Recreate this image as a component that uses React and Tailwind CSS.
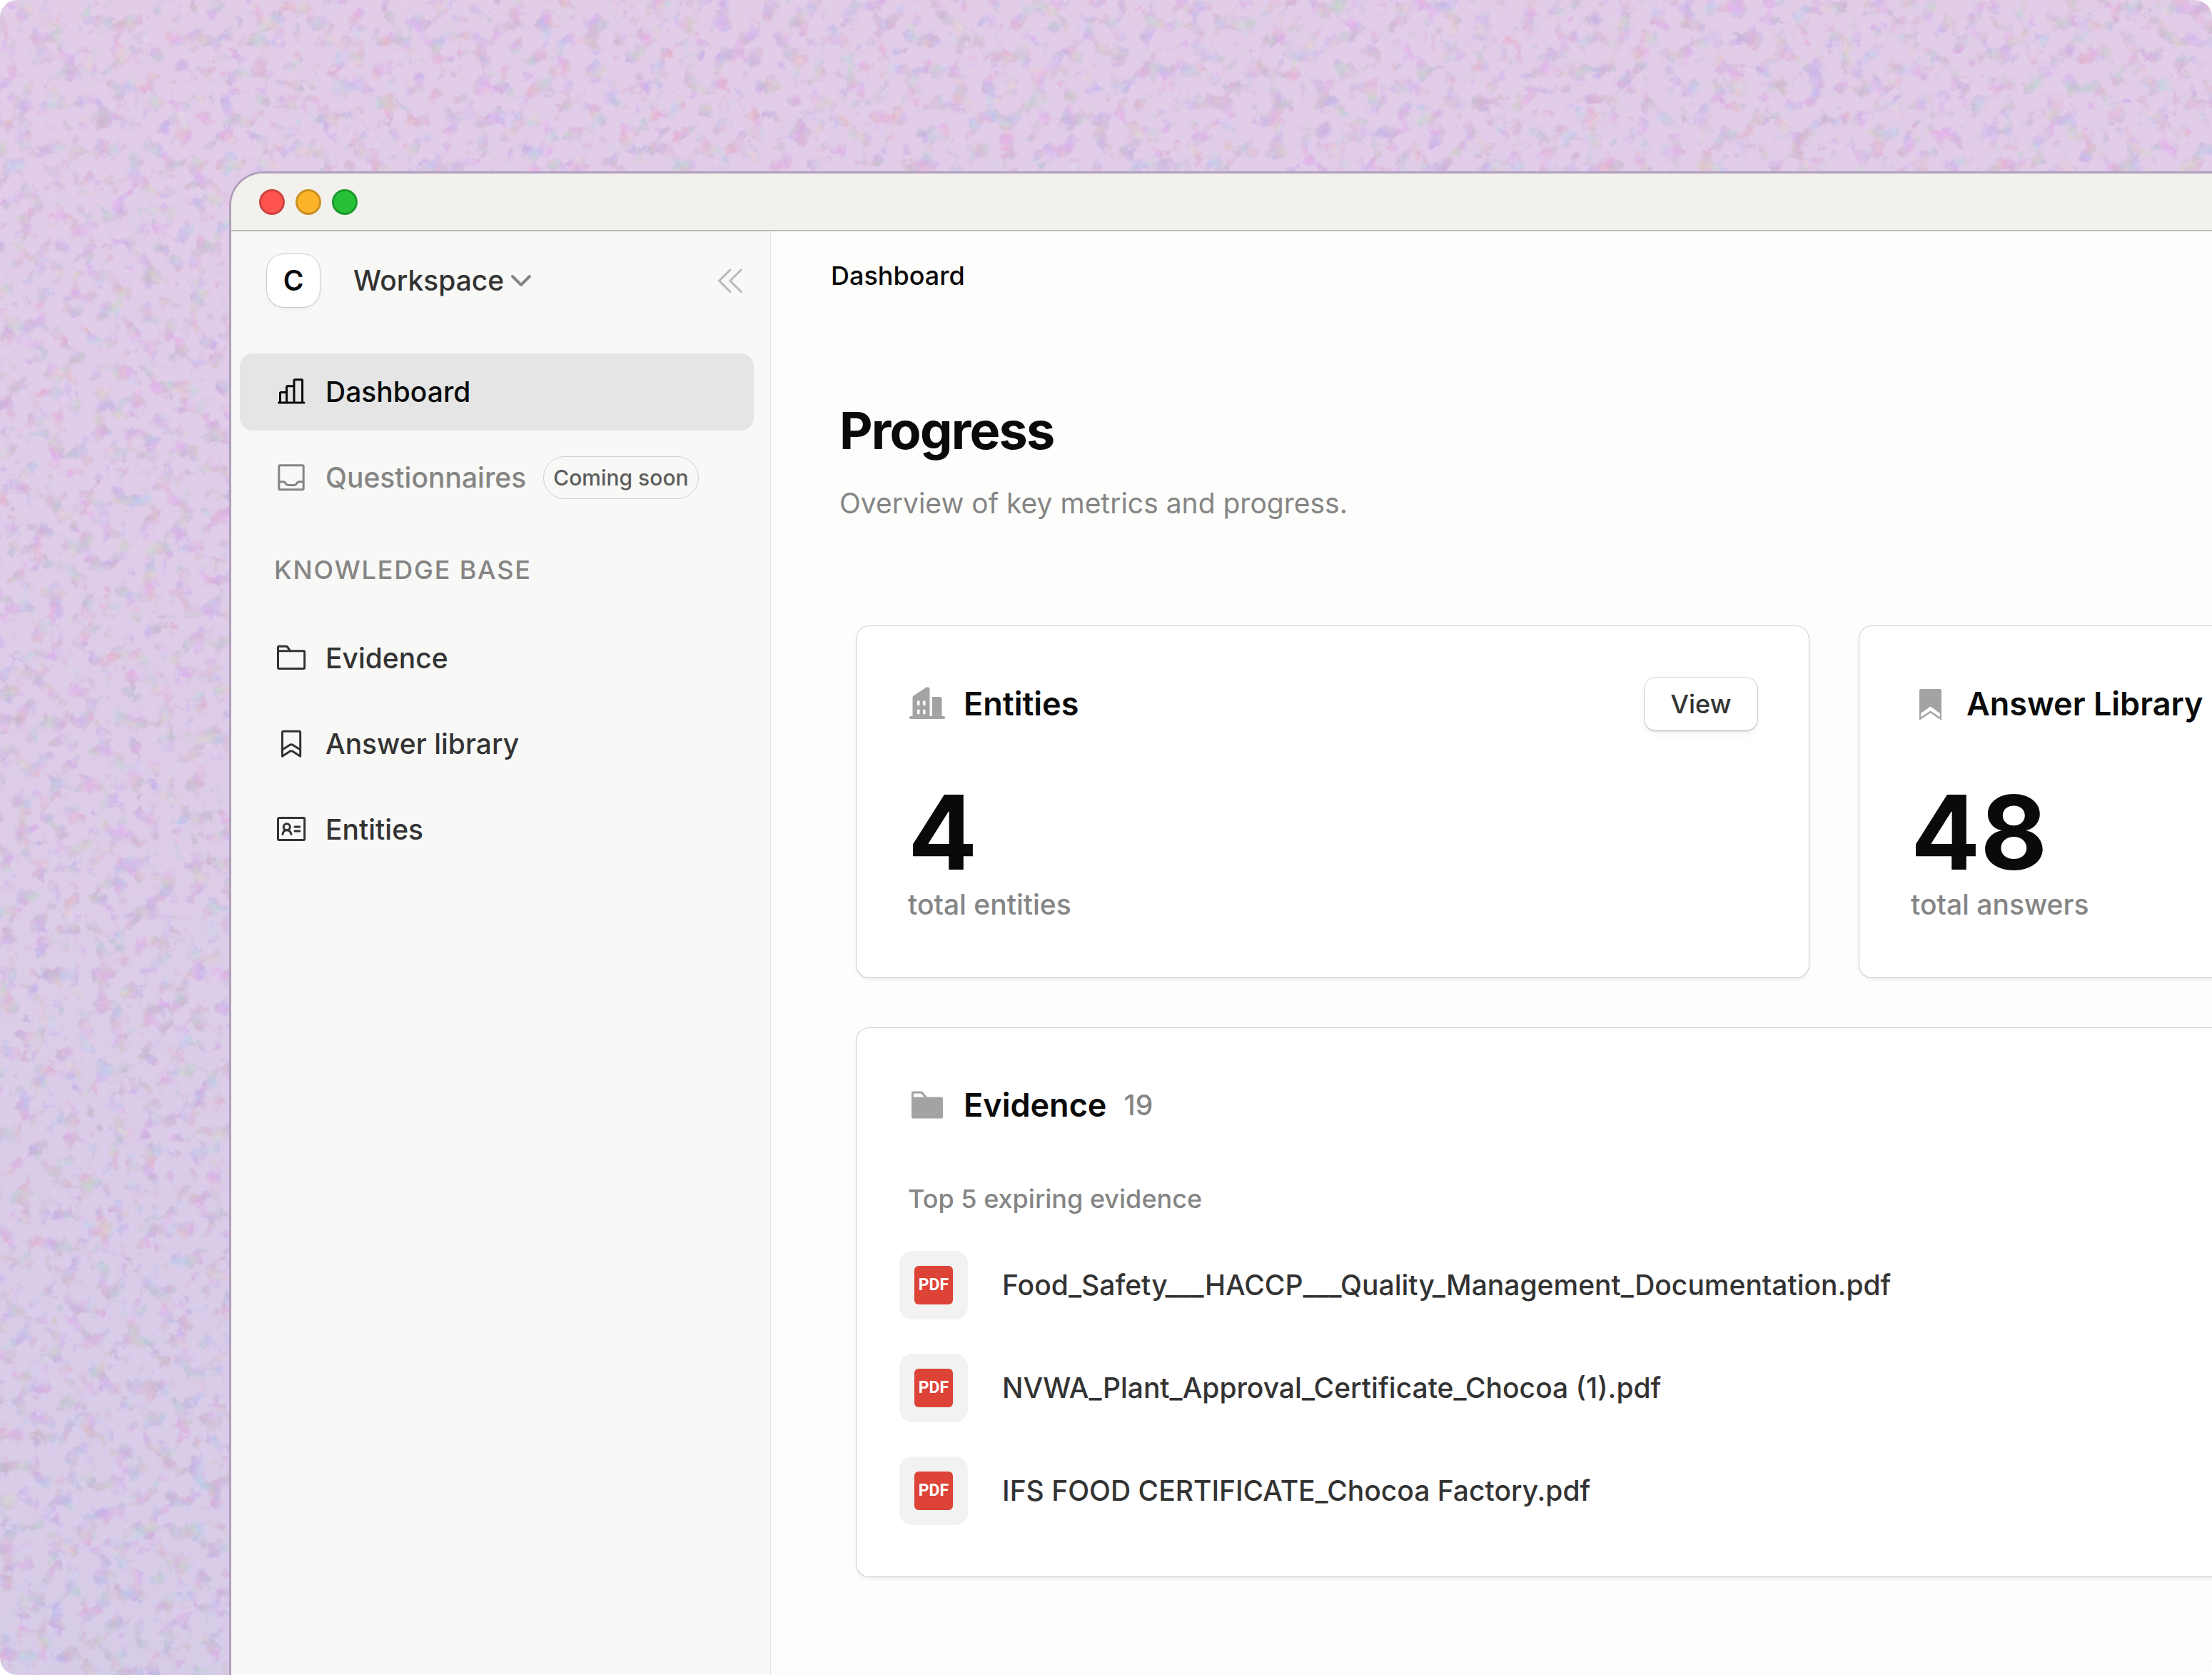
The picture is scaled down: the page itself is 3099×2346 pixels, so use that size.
const icon48 = {
  width: 48,
  height: 48,
  viewBox: '0 0 48 48',
  fill: 'none',
  stroke: 'currentColor',
  strokeWidth: 3,
  strokeLinecap: 'round',
  strokeLinejoin: 'round',
  'aria-hidden': true,
  className: 'shrink-0',
};

function ChartIcon() {
  return (
    <svg {...icon48}>
      <path d="M6.5 39H42M8.5 39V25.6Q8.5 24.4 9.7 24.4H17.6M17.6 39V17Q17.6 15.8 18.8 15.8H28M28 39V8Q28 6.8 29.2 6.8H38.4Q39.6 6.8 39.6 8V39" />
    </svg>
  );
}

function InboxIcon() {
  return (
    <svg {...icon48}>
      <rect x="6.8" y="6.8" width="34.4" height="34" rx="1.5" />
      <path d="M6.8 29.8H13.2Q14.6 29.8 15.5 31L17 33Q18 34.4 19.6 34.4H28.4Q30 34.4 31 33L32.5 31Q33.4 29.8 34.8 29.8H41.2" />
    </svg>
  );
}

function FolderIcon() {
  return (
    <svg {...icon48}>
      <path d="M5.5 13.8V8.8Q5.5 7.3 7 7.3H17Q18 7.3 18.6 8L22.8 13.8" />
      <path d="M5.5 13.8H41.2Q42.7 13.8 42.7 15.3V37Q42.7 38.5 41.2 38.5H7Q5.5 38.5 5.5 37Z" />
    </svg>
  );
}

function BookmarkIcon() {
  return (
    <svg {...icon48}>
      <path d="M11.5 41.2V7.7Q11.5 6.2 13 6.2H35.2Q36.7 6.2 36.7 7.7V41.2L26.4 34.4Q24.1 33 21.8 34.4Z" />
      <path d="M11.5 32L21.8 25.4Q24.1 24 26.4 25.4L36.7 32" />
    </svg>
  );
}

function IdCardIcon() {
  return (
    <svg {...icon48}>
      <rect x="5.5" y="7.6" width="37.2" height="30.8" rx="1.5" />
      <circle cx="17.8" cy="20.2" r="4.5" />
      <path d="M12 30.5Q12.8 24.8 17.8 24.8T24 30.5M29 20H35.8M29 26H35.8" />
    </svg>
  );
}

function ChevronDownIcon() {
  return (
    <svg width="36" height="36" viewBox="0 0 36 36" fill="none" stroke="#858585" strokeWidth="4" strokeLinecap="round" strokeLinejoin="round" aria-hidden="true">
      <path d="M7 12L19 24L31 12" />
    </svg>
  );
}

function CollapseIcon() {
  return (
    <svg width="48" height="48" viewBox="0 0 48 48" fill="none" stroke="#b9b9b9" strokeWidth="3" strokeLinecap="round" strokeLinejoin="round" aria-hidden="true">
      <path d="M24 9L8.5 24.2L24 39.5M39.3 9L23.8 24.2L39.3 39.5" />
    </svg>
  );
}

function BuildingSolidIcon() {
  return (
    <svg width="54" height="54" viewBox="0 0 54 54" fill="#a3a3a3" aria-hidden="true" className="shrink-0">
      <path
        fillRule="evenodd"
        d="M6.5 18Q6.5 16.4 7.8 15.4L25.6 3.8Q27 3 28.6 3.4Q30.5 4 30.5 6V44H34V17H45Q47.5 17 47.5 19.5V44H50.3Q52 44 52 46T50.3 48H3.7Q2 48 2 46T3.7 44H6.5ZM13 22.5V29H16.5V22.5ZM21 22.5V29H24.5V22.5ZM13 34.7V41.2H16.5V34.7ZM21 34.7V41.2H24.5V34.7Z"
      />
    </svg>
  );
}

function BookmarkSolidIcon() {
  return (
    <svg width="54" height="54" viewBox="0 0 54 54" fill="#a3a3a3" aria-hidden="true" className="shrink-0">
      <path
        fillRule="evenodd"
        d="M12 8Q12 6 14 6H41Q43 6 43 8V50L27.5 39.5L12 50ZM27.5 30.5L14.2 40V45.6L27.5 36.6L40.8 45.6V40Z"
      />
    </svg>
  );
}

function FolderSolidIcon() {
  return (
    <svg width="54" height="54" viewBox="0 0 54 54" fill="#a3a3a3" aria-hidden="true" className="shrink-0">
      <path
        fillRule="evenodd"
        d="M5 10Q5 7.5 7.5 7.5H18Q20 7.5 21.3 9L26.8 15.4H46.5Q49 15.4 49 18V43Q49 45.6 46.5 45.6H7.5Q5 45.6 5 43ZM8 10.5V15.4H22.6L19 11.2Q18.4 10.5 17.4 10.5Z"
      />
    </svg>
  );
}

function GrainBackground() {
  return (
    <svg className="absolute inset-0 h-full w-full" aria-hidden="true">
      <defs>
        <linearGradient id="wash" x1="0" y1="0" x2="0" y2="1">
          <stop offset="0" stopColor="#e2cde9" />
          <stop offset="1" stopColor="#d7cce8" />
        </linearGradient>
        <filter id="grain" x="0" y="0" width="100%" height="100%" colorInterpolationFilters="sRGB">
          <feTurbulence type="fractalNoise" baseFrequency="0.045" numOctaves="4" seed="7" />
          <feComponentTransfer>
            <feFuncR type="linear" slope="1.6" intercept="-0.2" />
            <feFuncG type="linear" slope="1.6" intercept="-0.3" />
            <feFuncB type="linear" slope="1.6" intercept="-0.15" />
            <feFuncA type="linear" slope="8" intercept="-3.8" />
          </feComponentTransfer>
        </filter>
      </defs>
      <rect width="100%" height="100%" fill="url(#wash)" />
      <rect width="100%" height="100%" filter="url(#grain)" opacity="0.12" />
    </svg>
  );
}

function NavItem({ icon, label, active, muted, badge }) {
  const tone = active ? 'bg-[#e5e5e5] text-[#0a0a0a]' : muted ? 'text-[#858585]' : 'text-[#333333]';
  return (
    <li>
      <a
        href="#"
        aria-current={active ? 'page' : undefined}
        className={`flex h-[108px] items-center gap-6 rounded-[18px] px-12 text-[39px] leading-[60px] font-medium ${tone}`}
      >
        {icon}
        <span>{label}</span>
        {badge && (
          <span className="flex h-[60px] items-center rounded-full border border-[#cfcfcf] px-[13px] text-[30px] leading-[36px] whitespace-nowrap text-[#5c5c5c]">
            {badge}
          </span>
        )}
      </a>
    </li>
  );
}

function Sidebar() {
  return (
    <aside className="w-[756px] shrink-0 border-r border-[#e6e6e6] bg-[#f8f8f6] pt-8">
      <div className="flex h-[74px] items-center pr-8 pl-[50px]">
        <span className="flex size-[74px] items-center justify-center rounded-[24px] bg-white text-[39px] font-semibold text-[#0a0a0a] shadow-[0_0_0_1px_rgba(0,0,0,0.16),0_3px_6px_rgba(0,0,0,0.06)]">
          C
        </span>
        <button type="button" className="ml-[47px] flex items-center gap-[5px] text-[39px] leading-[60px] font-medium text-[#333333]">
          Workspace
          <ChevronDownIcon />
        </button>
        <button type="button" aria-label="Collapse sidebar" className="ml-auto">
          <CollapseIcon />
        </button>
      </div>
      <nav className="mt-[65px] pr-[23px] pl-3">
        <ul className="flex flex-col gap-3">
          <NavItem icon={<ChartIcon />} label="Dashboard" active />
          <NavItem icon={<InboxIcon />} label="Questionnaires" muted badge="Coming soon" />
        </ul>
        <h2 className="mt-12 mb-[43px] pl-12 text-[36px] leading-[54px] font-medium tracking-wider text-[#858585]">
          KNOWLEDGE BASE
        </h2>
        <ul className="flex flex-col gap-3">
          <NavItem icon={<FolderIcon />} label="Evidence" />
          <NavItem icon={<BookmarkIcon />} label="Answer library" />
          <NavItem icon={<IdCardIcon />} label="Entities" />
        </ul>
      </nav>
    </aside>
  );
}

function Card({ children }) {
  return (
    <section className="rounded-[18px] bg-white p-[72px] shadow-[0_0_0_1px_rgba(0,0,0,0.17),0_3px_6px_rgba(0,0,0,0.07)]">
      {children}
    </section>
  );
}

function CardTitle({ icon, children }) {
  return (
    <div className="flex items-center gap-6">
      {icon}
      <h3 className="text-[45px] leading-[72px] font-semibold whitespace-nowrap text-[#0a0a0a]">{children}</h3>
    </div>
  );
}

function StatCard({ icon, title, value, caption }) {
  return (
    <Card>
      <div className="flex h-[74px] items-center justify-between">
        <CardTitle icon={icon}>{title}</CardTitle>
        <button
          type="button"
          className="h-[74px] w-[158px] rounded-[16px] bg-white text-[36px] font-medium text-[#333333] shadow-[0_0_0_1px_rgba(0,0,0,0.15),0_2px_3px_rgba(0,0,0,0.12),0_6px_12px_rgba(0,0,0,0.04)]"
        >
          View
        </button>
      </div>
      <p className="mt-[72px] text-[144px] leading-[142px] font-bold text-[#0a0a0a]">{value}</p>
      <p className="text-[39px] leading-[60px] font-medium text-[#858585]">{caption}</p>
    </Card>
  );
}

const files = [
  'Food_Safety___HACCP___Quality_Management_Documentation.pdf',
  'NVWA_Plant_Approval_Certificate_Chocoa (1).pdf',
  'IFS FOOD CERTIFICATE_Chocoa Factory.pdf',
];

function FileRow({ name }) {
  return (
    <li className="flex items-center gap-12">
      <span className="flex size-24 items-center justify-center rounded-[18px] bg-[#f2f2f2]">
        <span className="flex size-[54px] items-center justify-center rounded-[6px] bg-[#dd4437] font-['Roboto',sans-serif] text-[23px] font-bold text-white">
          PDF
        </span>
      </span>
      <a href="#" className="text-[39px] leading-[60px] font-medium text-[#333333]">
        {name}
      </a>
    </li>
  );
}

function EvidenceCard() {
  return (
    <Card>
      <div className="flex items-center gap-6">
        <CardTitle icon={<FolderSolidIcon />}>Evidence</CardTitle>
        <span className="text-[39px] leading-[60px] font-medium text-[#858585]">19</span>
      </div>
      <p className="mt-[70px] mb-12 text-[36px] leading-[50px] font-medium text-[#858585]">Top 5 expiring evidence</p>
      <ul className="-ml-3 flex flex-col gap-12">
        {files.map((name) => (
          <FileRow key={name} name={name} />
        ))}
      </ul>
    </Card>
  );
}

function TitleBar() {
  return (
    <div className="flex h-[81px] items-center gap-[15px] border-b-2 border-[#bbbab8] bg-[#f2f1ed] pl-[39px]">
      <span className="size-9 rounded-full border-[3px] border-[#cd443f] bg-[#ff544e]" />
      <span className="size-9 rounded-full border-[3px] border-[#cb9022] bg-[#feb42a]" />
      <span className="size-9 rounded-full border-[3px] border-[#1e9a2d] bg-[#26c138]" />
    </div>
  );
}

export default function App() {
  return (
    <div className="bg-white font-['Inter',sans-serif] text-[#0a0a0a]">
      <div className="relative flex min-h-screen flex-col overflow-hidden rounded-[24px] pt-[240px] pl-[321px]">
        <GrainBackground />
        <div className="relative mr-[-960px] flex flex-1 flex-col overflow-hidden rounded-tl-[48px] border-t-[3px] border-l-[3px] border-[#b0a0bb] bg-[#f2f1ed]">
          <TitleBar />
          <div className="flex flex-1">
            <Sidebar />
            <main className="min-w-0 flex-1 bg-[#fdfdfb]">
              <header className="flex h-[124px] items-center pl-[84px] text-[36px] font-medium">Dashboard</header>
              <div className="px-[96px] pt-[119px]">
                <h1 className="text-[72px] leading-[72px] font-bold tracking-tight">Progress</h1>
                <p className="mt-9 text-[39px] leading-[60px] text-[#858585]">Overview of key metrics and progress.</p>
              </div>
              <div className="flex flex-col gap-[71px] px-[120px] pt-[142px] pb-[120px]">
                <div className="grid grid-cols-2 gap-[71px]">
                  <StatCard icon={<BuildingSolidIcon />} title="Entities" value="4" caption="total entities" />
                  <StatCard icon={<BookmarkSolidIcon />} title="Answer Library" value="48" caption="total answers" />
                </div>
                <EvidenceCard />
              </div>
            </main>
          </div>
        </div>
      </div>
    </div>
  );
}
